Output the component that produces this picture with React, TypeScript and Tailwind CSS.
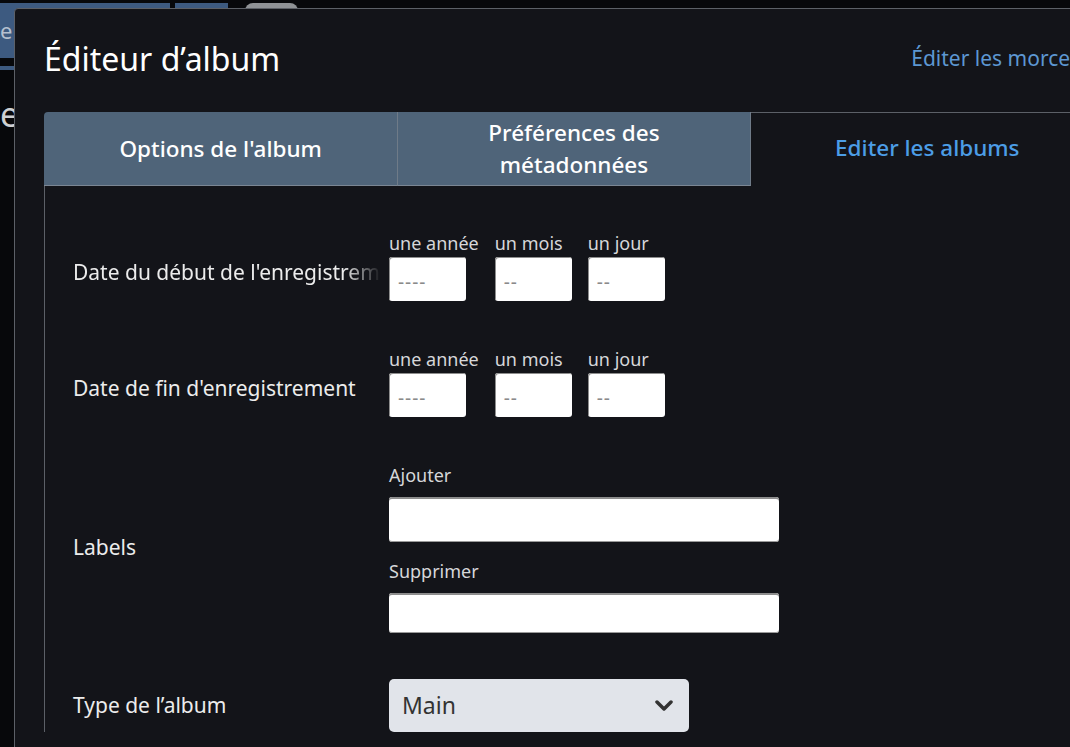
import React from 'react';

function DateField({ label, placeholder }: { label: string; placeholder: string }) {
  return (
    <div className="flex flex-col">
      <span className="text-[18px] leading-[24px] text-[#d6d7d9] whitespace-nowrap">{label}</span>
      <div className="mt-[2px] flex h-[44px] w-[77px] items-center rounded-[3px] bg-white pl-[9px] pt-[6px] text-[19px] leading-none tracking-[1px] text-[#8a8a8a] shadow-[inset_1px_1px_0_#8d8d8d]">
        {placeholder}
      </div>
    </div>
  );
}

function DateRow({ label, fade }: { label: string; fade?: boolean }) {
  return (
    <div className="flex items-center">
      <div className="w-[316px] pr-[8px]">
        <div
          className={
            fade
              ? "overflow-hidden whitespace-nowrap text-[21px] text-[#ececec] [mask-image:linear-gradient(to_right,black_88%,transparent)]"
              : "overflow-hidden whitespace-nowrap text-[21px] text-[#ececec]"
          }
        >
          {label}
        </div>
      </div>
      <div className="flex gap-4 pb-[14px]">
        <DateField label="une année" placeholder="----" />
        <DateField label="un mois" placeholder="--" />
        <DateField label="un jour" placeholder="--" />
      </div>
    </div>
  );
}

export default function App() {
  return (
    <div className="relative h-[747px] w-[1070px] overflow-hidden bg-[#07080b] font-['Noto_Sans',sans-serif]">
      {/* page underneath the dialog */}
      <div className="flex items-start pt-[3px]">
        <div className="h-[55px] w-[170px] bg-[#3d5a80] text-[22px] leading-[55px] text-[#b5c0cf]">e</div>
        <div className="ml-[5px] h-[20px] w-[53px] bg-[#3d5a80]" />
        <div className="ml-[17px] h-[20px] w-[53px] rounded-[8px] bg-[#8f9296]" />
      </div>
      <div className="mt-[8px] h-[4px] w-[170px] bg-[#3d5a80]" />
      <div className="mt-[24px] text-[34px] leading-[40px] text-[#cfd0d2]">ec</div>

      {/* dialog */}
      <div className="absolute left-[14px] top-[8px] h-[800px] w-[1120px] rounded-tl-[4px] border border-[#5c6067] bg-[#131419] px-[29px] pt-[28px]">
        <div className="flex items-center justify-between">
          <h1 className="text-[32px] leading-[44px] text-white">Éditeur d’album</h1>
          <a className="mr-[-2px] whitespace-nowrap text-[21px] text-[#5d97d2]">Éditer les morceaux</a>
        </div>

        <div className="mt-[31px] grid h-[74px] grid-cols-3">
          <div className="flex items-center justify-center rounded-tl-[4px] border-b border-[#7b8693] bg-[#4f6479] text-[22.5px] font-medium leading-[32px] text-white">
            Options de l'album
          </div>
          <div className="flex items-center justify-center border-b border-l border-r border-[#6f7b88] border-b-[#7b8693] bg-[#4f6479] text-center text-[22.5px] font-medium leading-[32px] text-white">
            Préférences des
            <br />
            métadonnées
          </div>
          <div className="flex items-center justify-center border-t border-[#5c6067] pb-[3px] text-[22.5px] font-medium leading-[32px] text-[#4c9de6]">
            Editer les albums
          </div>
        </div>

        <div className="flex flex-col gap-[32px] border-l border-[#5c6067] pl-[28px] pt-[45px]">
          <DateRow label="Date du début de l'enregistrement" fade />
          <DateRow label="Date de fin d'enregistrement" />

          <div className="flex items-center">
            <div className="w-[316px] text-[21px] text-[#ececec]">Labels</div>
            <div className="flex flex-col">
              <span className="text-[18px] leading-[24px] text-[#d6d7d9]">Ajouter</span>
              <div className="mt-[10px] h-[45px] w-[390px] rounded-[3px] bg-white shadow-[inset_0_2px_0_#8d8d8d,inset_0_-1px_0_#9a9a9a]" />
              <span className="mt-[17px] text-[18px] leading-[24px] text-[#d6d7d9]">Supprimer</span>
              <div className="mt-[10px] h-[40px] w-[390px] rounded-[3px] bg-white shadow-[inset_0_2px_0_#8d8d8d,inset_0_-1px_0_#9a9a9a]" />
            </div>
          </div>

          <div className="mt-[14px] flex items-center">
            <div className="w-[316px] text-[21px] text-[#ececec]">Type de l’album</div>
            <div className="flex h-[53px] w-[300px] items-center justify-between rounded-[5px] bg-[#e1e4ea] pl-[13px] pr-[16px] text-[23px] text-[#333]">
              <span>Main</span>
              <svg width="18" height="12" viewBox="0 0 18 12" fill="none">
                <polyline points="2,2 9,9 16,2" stroke="#333" strokeWidth="3.5" strokeLinecap="round" strokeLinejoin="round" />
              </svg>
            </div>
          </div>
        </div>
      </div>
    </div>
  );
}
